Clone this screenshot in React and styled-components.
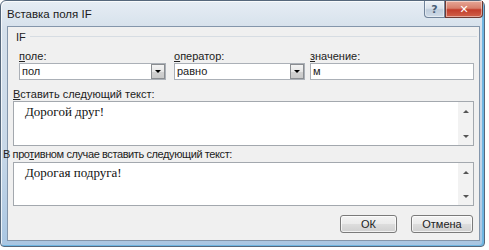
import React from 'react';
import styled, { createGlobalStyle } from 'styled-components';

const Global = createGlobalStyle`
  html, body { margin: 0; padding: 0; background: #ffffff; }
  body { font-family: "Liberation Sans", Arial, sans-serif; }
  #root { width: 489px; height: 250px; }
`;

const Window = styled.div`
  box-sizing: border-box;
  width: 485px;
  height: 247px;
  border: 1px solid #56687c;
  border-radius: 6px 6px 4px 4px;
  background: linear-gradient(180deg, #e6edf4 0%, #d5e0eb 12%, #c8d8e8 60%, #a9c6e2 100%);
  box-shadow: inset 1px 1px 0 rgba(255,255,255,.75), inset -2px -1px 0 #6fb6e2;
  display: flex;
  flex-direction: column;
  padding: 0 4px 5px 6px;
`;

const TitleBar = styled.div`
  height: 26px;
  display: flex;
  justify-content: space-between;
  align-items: flex-start;
`;

const Title = styled.div`
  align-self: center;
  font-size: 11.5px;
  color: #1a1a1a;
  margin-top: 1px;
`;

const CaptionButtons = styled.div`
  display: flex;
  margin-right: -3px;
`;

const CapButton = styled.div`
  box-sizing: border-box;
  width: ${p => p.$w}px;
  height: 17px;
  border: 1px solid ${p => (p.$close ? '#6e3a33' : '#70839a')};
  border-top: none;
  border-radius: ${p => (p.$close ? '0 0 4px 0' : '0 0 0 4px')};
  background: ${p =>
    p.$close
      ? 'linear-gradient(180deg, #e6a797 0%, #d77f6c 45%, #c23d2b 55%, #d0624b 100%)'
      : 'linear-gradient(180deg, #edf2f7 0%, #d9e2ec 45%, #bfcddc 55%, #cfdbe8 100%)'};
  box-shadow: inset 0 0 0 1px rgba(255,255,255,.45);
  display: flex;
  align-items: center;
  justify-content: center;
  font: bold 11px "DejaVu Sans", sans-serif;
  color: ${p => (p.$close ? '#fff' : '#4b5f76')};
`;

const Client = styled.div`
  flex: 1;
  border: 1px solid #8496ab;
  background: #f0f0f0;
  display: flex;
  flex-direction: column;
  padding: 3px 5px 7px 5px;
`;

const GroupHeader = styled.div`
  display: flex;
  align-items: center;
  gap: 4px;
  padding-left: 3px;
  height: 13px;
  font-size: 11px;
  color: #222;
`;

const GroupLine = styled.div`
  flex: 1;
  height: 1px;
  background: #d7dde3;
  margin-right: -3px;
`;

const FieldsRow = styled.div`
  display: flex;
  padding-left: 6px;
  margin-top: 6px;
`;

const Field = styled.div`
  display: flex;
  flex-direction: column;
  width: ${p => p.$w}px;
  margin-right: ${p => p.$mr || 0}px;
`;

const Label = styled.div`
  font-size: 11px;
  line-height: 14px;
  color: #222;
  white-space: nowrap;
  margin-left: ${p => p.$ml || 0}px;
  margin-top: ${p => p.$mt || 0}px;
  letter-spacing: ${p => p.$ls || 0}px;
`;

const U = styled.span`
  text-decoration: underline;
`;

const Combo = styled.div`
  box-sizing: border-box;
  height: 17px;
  border: 1px solid #abb0b7;
  background: #fff;
  display: flex;
  align-items: stretch;
`;

const ComboText = styled.div`
  flex: 1;
  font-size: 11px;
  line-height: 15px;
  padding-left: 2px;
  color: #222;
`;

const DropButton = styled.div`
  box-sizing: border-box;
  width: 14px;
  border: 1px solid #8a8d91;
  background: linear-gradient(180deg, #f4f4f4 0%, #e6e6e6 50%, #d2d2d2 51%, #c9c9c9 100%);
  display: flex;
  align-items: center;
  justify-content: center;
`;

const DownTri = styled.span`
  width: 0;
  height: 0;
  border-left: 3px solid transparent;
  border-right: 3px solid transparent;
  border-top: 3px solid ${p => p.$c || '#000'};
`;

const UpTri = styled.span`
  width: 0;
  height: 0;
  border-left: 3px solid transparent;
  border-right: 3px solid transparent;
  border-bottom: 3px solid ${p => p.$c || '#000'};
`;

const TextBox = styled.div`
  box-sizing: border-box;
  height: ${p => p.$h}px;
  border: 1px solid #a3a8ae;
  background: #fff;
  display: flex;
  margin-top: ${p => p.$mt || 0}px;
`;

const TextContent = styled.div`
  flex: 1;
  padding: 2px 0 0 11px;
  font-family: "Liberation Serif", "Times New Roman", serif;
  font-size: 13px;
  line-height: 16px;
  color: #111;
`;

const ScrollBar = styled.div`
  width: 15px;
  background: #f2f2f2;
  display: flex;
  flex-direction: column;
  justify-content: space-between;
  align-items: center;
  padding: 8px 0 7px;
`;

const ButtonRow = styled.div`
  display: flex;
  justify-content: flex-end;
  gap: 14px;
  margin-top: 9px;
  padding-right: 1px;
`;

const Button = styled.div`
  box-sizing: border-box;
  width: ${p => p.$w}px;
  height: 18px;
  border: 1px solid #7a7a7a;
  border-radius: 3px;
  background: linear-gradient(180deg, #f3f3f3 0%, #ebebeb 48%, #dddddd 52%, #cfcfcf 100%);
  box-shadow: inset 0 0 0 1px rgba(255,255,255,.7);
  display: flex;
  align-items: center;
  justify-content: center;
  font-size: 11px;
  color: #222;
`;

function Scroll() {
  return (
    <ScrollBar>
      <UpTri $c="#555" />
      <DownTri $c="#555" />
    </ScrollBar>
  );
}

export default function App() {
  return (
    <>
      <Global />
      <Window>
        <TitleBar>
          <Title>Вставка поля IF</Title>
          <CaptionButtons>
            <CapButton $w={21}>?</CapButton>
            <CapButton $w={38} $close>✕</CapButton>
          </CaptionButtons>
        </TitleBar>
        <Client>
          <GroupHeader>
            IF
            <GroupLine />
          </GroupHeader>
          <FieldsRow>
            <Field $w={147} $mr={8}>
              <Label><U>п</U>оле:</Label>
              <Combo>
                <ComboText>пол</ComboText>
                <DropButton><DownTri /></DropButton>
              </Combo>
            </Field>
            <Field $w={131} $mr={5}>
              <Label><U>о</U>ператор:</Label>
              <Combo>
                <ComboText>равно</ComboText>
                <DropButton><DownTri /></DropButton>
              </Combo>
            </Field>
            <Field $w={164}>
              <Label><U>з</U>начение:</Label>
              <Combo>
                <ComboText>м</ComboText>
              </Combo>
            </Field>
          </FieldsRow>
          <Label $mt={7}><U>В</U>ставить следующий текст:</Label>
          <TextBox $h={45}>
            <TextContent>Дорогой друг!</TextContent>
            <Scroll />
          </TextBox>
          <Label $mt={1} $ml={-10} $ls={-0.4}>В про<U>т</U>ивном случае вставить следующий текст:</Label>
          <TextBox $h={44} $mt={1}>
            <TextContent>Дорогая подруга!</TextContent>
            <Scroll />
          </TextBox>
          <ButtonRow>
            <Button $w={57}>ОК</Button>
            <Button $w={62}>Отмена</Button>
          </ButtonRow>
        </Client>
      </Window>
    </>
  );
}
